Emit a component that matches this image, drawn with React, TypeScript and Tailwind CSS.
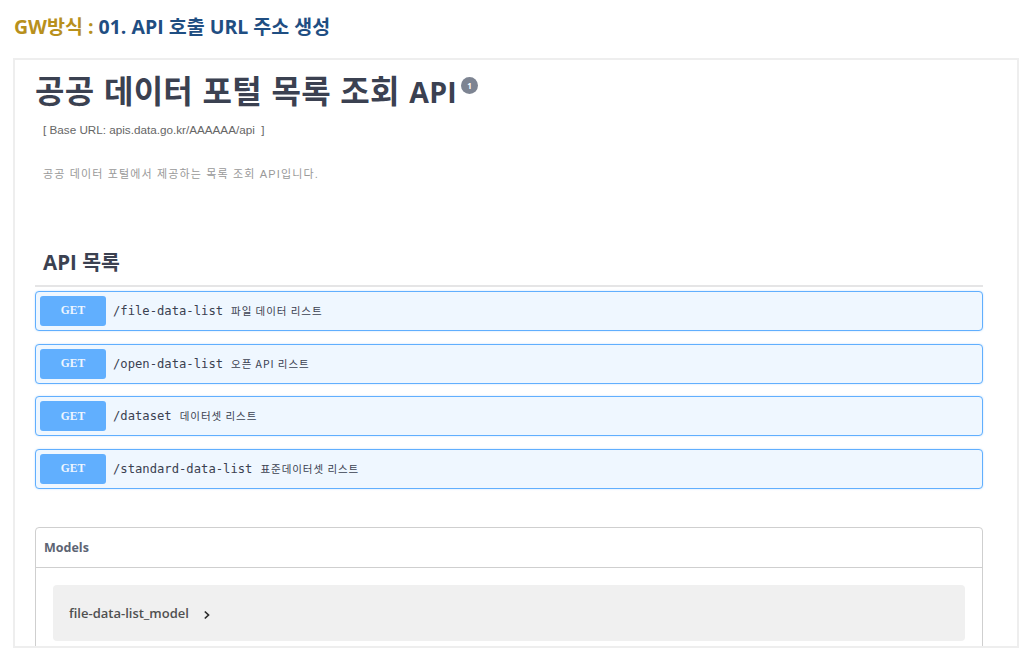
// App.tsx
const sans = "font-['Open_Sans','Noto_Sans_CJK_KR',sans-serif]";

const endpoints = [
  { path: "/file-data-list", summary: "파일 데이터 리스트" },
  { path: "/open-data-list", summary: "오픈 API 리스트" },
  { path: "/dataset", summary: "데이터셋 리스트" },
  { path: "/standard-data-list", summary: "표준데이터셋 리스트" },
];

const Endpoint = ({ path, summary }: { path: string; summary: string }) => {
  return (
    <div className="flex items-center h-10 rounded border border-[#61affe] bg-[#eff7ff] pl-1 shadow-[0_0_2px_rgba(97,175,254,0.4)]">
      <div className="flex items-center justify-center w-[66px] h-[30px] rounded-[3px] bg-[#61affe] text-[#eef6ff] text-[11.5px] font-bold font-['Liberation_Serif','Noto_Sans_CJK_KR',serif]">
        GET
      </div>
      <span className="ml-[7px] text-[#3b4151] text-[12.2px] font-['DejaVu_Sans_Mono','Noto_Sans_CJK_KR',monospace]">
        {path}
      </span>
      <span className="ml-2 text-[#3b4151] text-[10.5px] tracking-[0.95px] font-['Noto_Sans_CJK_KR',sans-serif]">
        {summary}
      </span>
    </div>
  );
};

const App = () => {
  return (
    <div className={`h-[659px] w-[1033px] overflow-hidden bg-white ${sans}`}>
      {/* Slide heading */}
      <h2 className="h-[58px] pl-[14px] pt-[14px] text-[19.5px] leading-[26px] font-bold text-[#1f4e82]">
        <span className="text-[#b8901c]">GW방식 : </span>
        01. API 호출 URL 주소 생성
      </h2>

      {/* Captured swagger page */}
      <div className="ml-[13px] h-[590px] w-[1006px] overflow-hidden border-2 border-[#eeeeee] pl-5 pr-[34px]">
        <div className="flex items-start pt-[11px]">
          <h1 className="text-[32px] leading-[40px] font-bold text-[#3b4151] tracking-[0.3px] [word-spacing:0.8px]">
            공공 데이터 포털 목록 조회 <span className="text-[28.5px]">API</span>
          </h1>
          <span className="ml-[4px] mt-[6px] flex h-[17px] w-[17px] items-center justify-center rounded-full bg-[#7d8492] text-[8px] font-bold text-white">
            1
          </span>
        </div>
        <p className="mt-[10px] pl-2 text-[11.7px] leading-[16px] text-[#666666] font-['Liberation_Sans','Noto_Sans_CJK_KR',sans-serif]">
          [ Base URL: apis.data.go.kr/AAAAAA/api&nbsp; ]
        </p>
        <p className="mt-[28px] pl-2 text-[11px] leading-[16px] tracking-[1.15px] text-[#999999] font-['Liberation_Sans','Noto_Sans_CJK_KR',sans-serif]">
          공공 데이터 포털에서 제공하는 목록 조회 API입니다.
        </p>

        {/* API list */}
        <div className="mt-[68px] flex h-[37px] items-center border-b-2 border-[#e5e5e6] pb-[10px] pl-2 text-[20.5px] font-bold text-[#3b4151]">
          API 목록
        </div>
        <div className="mt-1 flex flex-col gap-[12.67px]">
          {endpoints.map((item) => (
            <Endpoint key={item.path} path={item.path} summary={item.summary} />
          ))}
        </div>

        {/* Models */}
        <div className="mt-[38px] rounded border border-[#cfcfcf]">
          <div className="flex h-10 items-center border-b border-[#cfcfcf] px-2 pt-[2px] text-[12.5px] font-bold text-[#5d6473]">
            Models
          </div>
          <div className="px-[17px] pt-[17px] pb-5">
            <div className="flex h-14 items-center rounded bg-[#f0f0f0] pl-4 pt-[2px] text-[13px] font-semibold text-[#505050]">
              file-data-list_model
              <svg className="ml-[14px] mt-[3px]" width="8" height="10" viewBox="0 0 8 10" fill="none">
                <path d="M1.8 1.5L5.5 5L1.8 8.5" stroke="#2b2b2b" strokeWidth="1.7" />
              </svg>
            </div>
          </div>
        </div>
      </div>
    </div>
  );
};

export default App;
